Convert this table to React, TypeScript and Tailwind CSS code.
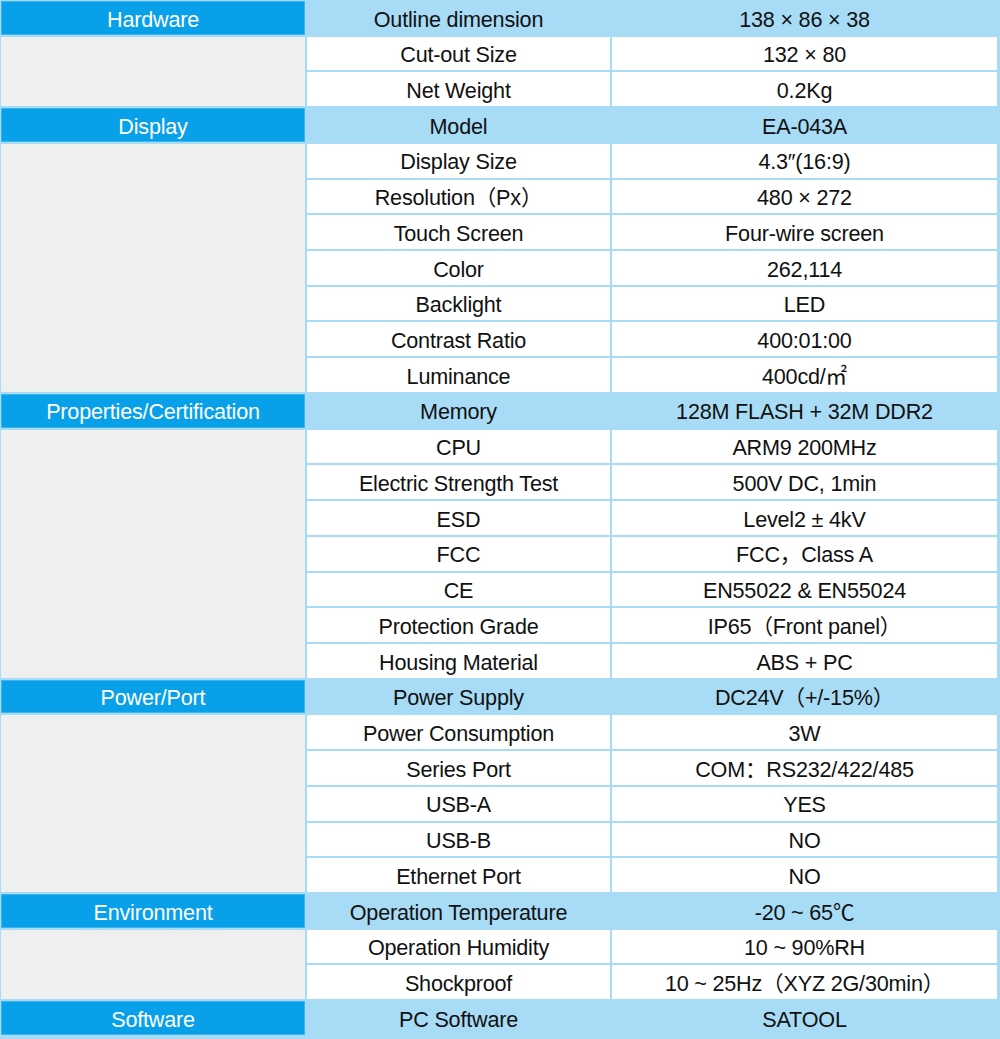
type Spec = { group: string; rows: [string, string][] };

const specs: Spec[] = [
  {
    group: "Hardware",
    rows: [
      ["Outline dimension", "138 × 86 × 38"],
      ["Cut-out Size", "132 × 80"],
      ["Net Weight", "0.2Kg"],
    ],
  },
  {
    group: "Display",
    rows: [
      ["Model", "EA-043A"],
      ["Display Size", "4.3″(16:9)"],
      ["Resolution（Px）", "480 × 272"],
      ["Touch Screen", "Four-wire screen"],
      ["Color", "262,114"],
      ["Backlight", "LED"],
      ["Contrast Ratio", "400:01:00"],
      ["Luminance", "400cd/㎡"],
    ],
  },
  {
    group: "Properties/Certification",
    rows: [
      ["Memory", "128M FLASH + 32M DDR2"],
      ["CPU", "ARM9 200MHz"],
      ["Electric Strength Test", "500V DC, 1min"],
      ["ESD", "Level2 ± 4kV"],
      ["FCC", "FCC，Class A"],
      ["CE", "EN55022 & EN55024"],
      ["Protection Grade", "IP65（Front panel）"],
      ["Housing Material", "ABS + PC"],
    ],
  },
  {
    group: "Power/Port",
    rows: [
      ["Power Supply", "DC24V（+/-15%）"],
      ["Power Consumption", "3W"],
      ["Series Port", "COM：RS232/422/485"],
      ["USB-A", "YES"],
      ["USB-B", "NO"],
      ["Ethernet Port", "NO"],
    ],
  },
  {
    group: "Environment",
    rows: [
      ["Operation Temperature", "-20 ~ 65℃"],
      ["Operation Humidity", "10 ~ 90%RH"],
      ["Shockproof", "10 ~ 25Hz（XYZ 2G/30min）"],
    ],
  },
  {
    group: "Software",
    rows: [["PC Software", "SATOOL"]],
  },
];

// row-span classes written out so tailwind picks them up
const spanClass: Record<number, string> = {
  1: "row-span-1",
  2: "row-span-2",
  5: "row-span-5",
  7: "row-span-7",
};

const cell = "flex items-center justify-center whitespace-nowrap pt-[3px]";

export default function App() {
  return (
    <div
      className="w-[1000px] h-[1039px] bg-[#a8dcf6] pt-[1px] pl-[1px] text-[21.6px] tracking-[-0.2px] text-[#111] overflow-hidden"
      style={{ fontFamily: '"Liberation Sans", Arial, "Noto Sans CJK SC", sans-serif' }}
    >
      <div className="grid grid-cols-[304px_303px_385px] grid-rows-[repeat(29,33.72px)] gap-x-[2px] gap-y-[2px] leading-none">
        {specs.map((s) => {
          const [head, ...rest] = s.rows;
          return [
            <div
              key={s.group + "-cat"}
              className={`${cell} bg-[#08a0e9] text-white border border-[#3fb3ee]`}
            >
              {s.group}
            </div>,
            <div key={s.group + "-h1"} className={cell}>
              {head[0]}
            </div>,
            <div key={s.group + "-h2"} className={cell}>
              {head[1]}
            </div>,
            rest.length > 0 ? (
              <div
                key={s.group + "-gray"}
                className={`${spanClass[rest.length]} bg-[#eef0ef]`}
              />
            ) : null,
            ...rest.flatMap(([label, value]) => [
              <div key={s.group + label + "-l"} className={`${cell} bg-white`}>
                {label}
              </div>,
              <div key={s.group + label + "-v"} className={`${cell} bg-white`}>
                {value}
              </div>,
            ]),
          ];
        })}
      </div>
    </div>
  );
}
